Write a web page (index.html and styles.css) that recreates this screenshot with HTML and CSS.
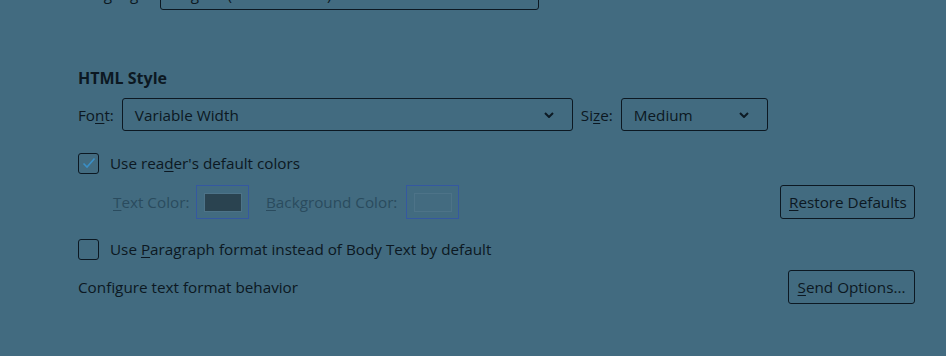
FILE: index.html
```html
<!DOCTYPE html>
<html lang="en">
<head>
  <meta charset="UTF-8">
  <title>Composition options</title>
  <link rel="stylesheet" href="styles.css">
</head>
<body>

  <div class="panel">
    <div class="row lang-row">
      <span class="label lang-label">Language:</span>
      <div class="select lang-select"><span>English (United States)</span></div>
    </div>

    <h3 class="section-title">HTML Style</h3>

    <div class="row font-row">
      <span class="label">Fo<u>n</u>t:</span>
      <div class="select font-select">
        <span>Variable Width</span>
        <svg class="chev" width="10" height="6" viewBox="0 0 10 6"><path d="M1 1 L5 5 L9 1" fill="none" stroke="#0c1a24" stroke-width="2"/></svg>
      </div>
      <span class="label size-label">Si<u>z</u>e:</span>
      <div class="select size-select">
        <span>Medium</span>
        <svg class="chev" width="10" height="6" viewBox="0 0 10 6"><path d="M1 1 L5 5 L9 1" fill="none" stroke="#0c1a24" stroke-width="2"/></svg>
      </div>
    </div>

    <div class="row check-row first-check">
      <span class="checkbox">
        <svg width="14" height="12" viewBox="0 0 14 12"><path d="M1.5 6.5 L5 10 L12.5 1.5" fill="none" stroke="#3a8fc6" stroke-width="1.6"/></svg>
      </span>
      <span>Use rea<u>d</u>er's default colors</span>
    </div>

    <div class="row color-row">
      <span class="label disabled text-label"><u>T</u>ext Color:</span>
      <span class="color-btn"><span class="swatch swatch-text"></span></span>
      <span class="label disabled bg-label"><u>B</u>ackground Color:</span>
      <span class="color-btn"><span class="swatch swatch-bg"></span></span>
      <span class="spacer"></span>
      <button class="btn restore-btn"><u>R</u>estore Defaults</button>
    </div>

    <div class="row check-row second-check">
      <span class="checkbox"></span>
      <span>Use <u>P</u>aragraph format instead of Body Text by default</span>
    </div>

    <div class="row config-row">
      <span>Configure text format behavior</span>
      <span class="spacer"></span>
      <button class="btn send-btn"><u>S</u>end Options...</button>
    </div>
  </div>

</body>
</html>
```

FILE: styles.css
```css
body {
  margin: 0;
  background: #426b80;
  font-family: 'Open Sans', 'Noto Sans', sans-serif;
  font-size: 15.25px;
  color: #0c1822;
  overflow: hidden;
}

.panel {
  width: 837px;
  padding-left: 78px;
}

.row {
  display: flex;
  align-items: center;
}

u {
  text-decoration-thickness: 1px;
  text-underline-offset: 2px;
}

.select {
  box-sizing: border-box;
  height: 33px;
  border: 1px solid #0c1822;
  border-radius: 3px;
  display: flex;
  align-items: center;
  justify-content: space-between;
  padding: 0 18px 0 12px;
}

.lang-row {
  margin-top: -23px;
}

.lang-label {
  width: 82px;
  white-space: nowrap;
}

.lang-select {
  width: 379px;
}

.section-title {
  margin: 57px 0 0;
  font-size: 16px;
  font-weight: 700;
  line-height: 22px;
}

.font-row {
  margin-top: 9px;
}

.font-select {
  width: 451px;
  margin-left: 8px;
}

.size-label {
  margin-left: 8px;
}

.size-select {
  width: 147px;
  margin-left: 8px;
}

.chev {
  display: block;
}

.check-row {
  height: 20px;
}

.first-check {
  margin-top: 22px;
}

.second-check {
  margin-top: 20px;
}

.checkbox {
  box-sizing: border-box;
  width: 21px;
  height: 21px;
  border: 1px solid #0c1822;
  border-radius: 3px;
  margin-right: 11px;
  display: flex;
  align-items: center;
  justify-content: center;
}

.color-row {
  margin-top: 12px;
  padding-left: 35px;
}

.disabled {
  color: #2a4b5e;
}

.text-label {
  width: 75px;
  white-space: nowrap;
}

.color-btn {
  box-sizing: border-box;
  width: 53px;
  height: 34px;
  border: 1px solid #3558a0;
  margin-left: 8px;
  display: flex;
  align-items: center;
  justify-content: center;
}

.swatch {
  box-sizing: border-box;
  width: 38px;
  height: 19px;
  border: 1px solid #4d7388;
}

.swatch-text {
  background: #2a4350;
}

.swatch-bg {
  background: #436b80;
}

.bg-label {
  margin-left: 17px;
  width: 132px;
  white-space: nowrap;
}

.spacer {
  flex: 1;
}

.btn {
  box-sizing: border-box;
  height: 34px;
  background: transparent;
  border: 1px solid #0c1822;
  border-radius: 3px;
  font-family: inherit;
  font-size: 15.25px;
  color: #0c1822;
  padding: 0 8px;
  white-space: nowrap;
}

.restore-btn {
  width: 135px;
}

.config-row {
  margin-top: 11px;
}

.send-btn {
  width: 127px;
}
```
